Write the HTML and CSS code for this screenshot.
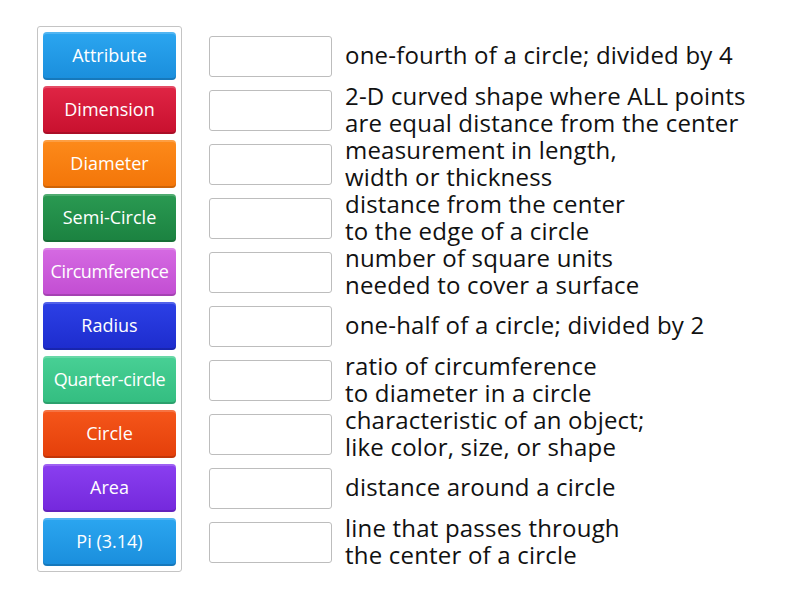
FILE: index.html
```html
<!DOCTYPE html>
<html>
<head>
<meta charset="utf-8">
<link rel="stylesheet" href="styles.css">
</head>
<body>
<div class="game">
  <div class="panel">
    <div class="tile c-attr">Attribute</div>
    <div class="tile c-dim">Dimension</div>
    <div class="tile c-diam">Diameter</div>
    <div class="tile c-semi">Semi-Circle</div>
    <div class="tile c-circ">Circumference</div>
    <div class="tile c-rad">Radius</div>
    <div class="tile c-quar">Quarter-circle</div>
    <div class="tile c-circle">Circle</div>
    <div class="tile c-area">Area</div>
    <div class="tile c-pi">Pi (3.14)</div>
  </div>
  <div class="rows">
    <div class="row"><div class="slot"></div><div class="def">one-fourth of a circle; divided by 4</div></div>
    <div class="row"><div class="slot"></div><div class="def">2-D curved shape where ALL points<br>are equal distance from the center</div></div>
    <div class="row"><div class="slot"></div><div class="def">measurement in length,<br>width or thickness</div></div>
    <div class="row"><div class="slot"></div><div class="def">distance from the center<br>to the edge of a circle</div></div>
    <div class="row"><div class="slot"></div><div class="def">number of square units<br>needed to cover a surface</div></div>
    <div class="row"><div class="slot"></div><div class="def">one-half of a circle; divided by 2</div></div>
    <div class="row"><div class="slot"></div><div class="def">ratio of circumference<br>to diameter in a circle</div></div>
    <div class="row"><div class="slot"></div><div class="def">characteristic of an object;<br>like color, size, or shape</div></div>
    <div class="row"><div class="slot"></div><div class="def">distance around a circle</div></div>
    <div class="row"><div class="slot"></div><div class="def">line that passes through<br>the center of a circle</div></div>
  </div>
</div>
</body>
</html>
```
FILE: styles.css
```css
html, body {
  margin: 0;
  padding: 0;
  background: #ffffff;
}
body {
  font-family: "Open Sans", "Liberation Sans", sans-serif;
  width: 800px;
  height: 600px;
  overflow: hidden;
}
.game {
  display: flex;
  align-items: flex-start;
  padding: 26px 0 0 37px;
}
.panel {
  display: flex;
  flex-direction: column;
  gap: 6px;
  padding: 5px;
  border: 1px solid #c4c4c4;
  border-radius: 3px;
  background: #fff;
}
.tile {
  width: 133px;
  height: 48px;
  box-sizing: border-box;
  border-radius: 4px;
  color: #fff;
  font-size: 18px;
  font-weight: 500;
  display: flex;
  align-items: center;
  justify-content: center;
  padding-bottom: 2px;
  box-shadow: inset 0 2px 0 rgba(255,255,255,0.18), inset 0 -2px 0 rgba(0,0,0,0.15);
  white-space: nowrap;
}
.c-attr { background: linear-gradient(#2ba6f0, #1a8edc); }
.c-dim { background: linear-gradient(#e02545, #c8102e); }
.c-diam { background: linear-gradient(#fd8a1a, #f37508); }
.c-semi { background: linear-gradient(#2a9a52, #1b8240); }
.c-circ { background: linear-gradient(#d56ae2, #c24dd2); letter-spacing: -0.4px; }
.c-rad { background: linear-gradient(#2c40e6, #1d2ccd); }
.c-quar { background: linear-gradient(#48d095, #33bd80); letter-spacing: -0.3px; }
.c-circle { background: linear-gradient(#f5561a, #e43f0a); }
.c-area { background: linear-gradient(#8a3ff0, #7428dc); }
.c-pi { background: linear-gradient(#2ba6f0, #1a8edc); }
.rows {
  display: flex;
  flex-direction: column;
  gap: 6px;
  padding-top: 6px;
  margin-left: 27px;
}
.row {
  height: 48px;
  display: flex;
  align-items: center;
  gap: 13px;
}
.slot {
  width: 123px;
  height: 41px;
  box-sizing: border-box;
  border: 1px solid #bdbdbd;
  border-radius: 3px;
  background: #fff;
  flex: none;
}
.def {
  font-size: 24px;
  line-height: 27px;
  color: #111;
  white-space: nowrap;
  letter-spacing: 0.2px;
  margin-top: -3px;
}
```
